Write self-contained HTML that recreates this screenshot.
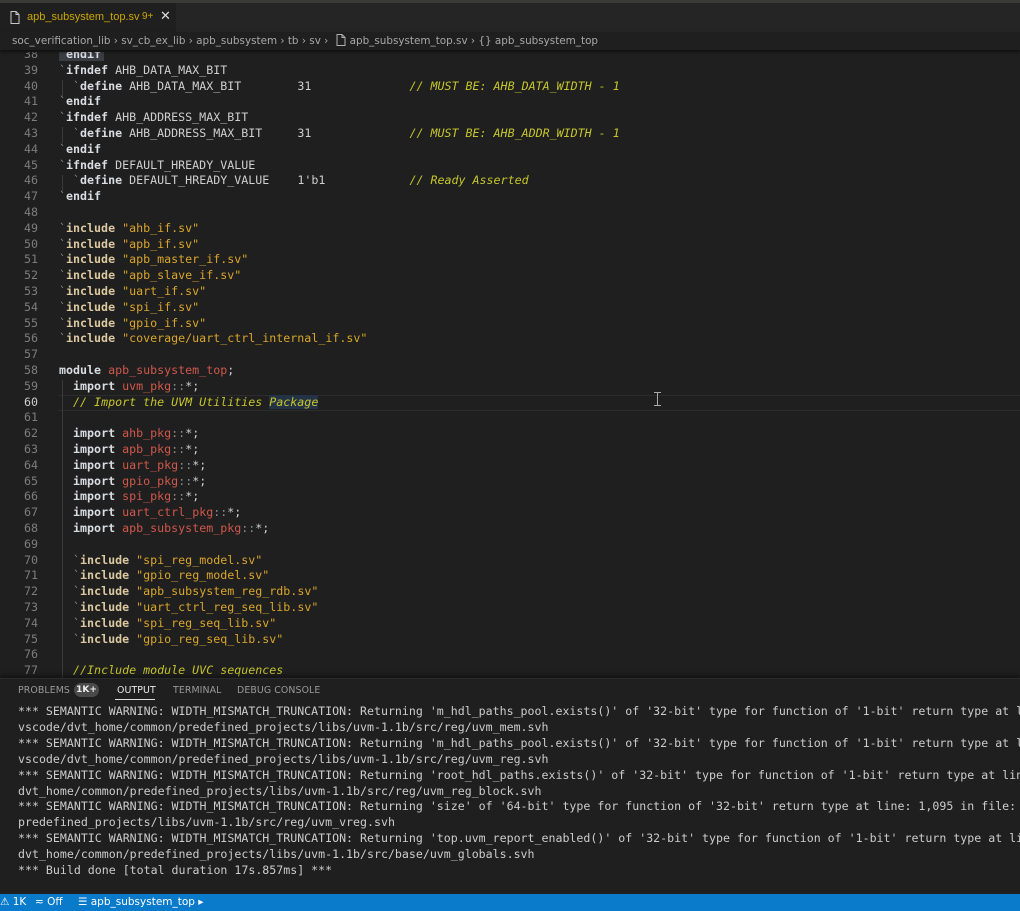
<!DOCTYPE html>
<html><head><meta charset="utf-8"><style>
*{margin:0;padding:0;box-sizing:border-box}
body{width:1020px;height:911px;background:#1f1f1f;overflow:hidden;position:relative;font-family:"DejaVu Sans","Liberation Sans",sans-serif}
.top{position:absolute;left:0;top:0;width:1020px;height:3px;background:#3a3a36}
.tabbar{position:absolute;left:0;top:3px;width:1020px;height:29px;background:#252525}
.tab{position:absolute;left:0;top:0;width:176px;height:29px;background:#1f1f1f;font-size:11px;color:#cca700;font-family:"Liberation Sans",sans-serif}
.bc{position:absolute;left:0;top:32px;width:1020px;height:18px;background:#1f1f1f;font-size:10.4px;color:#a8a8a8;padding-left:12px;line-height:18px;white-space:pre;box-shadow:0 2px 3px rgba(0,0,0,.5);z-index:2}
.ed{position:absolute;left:0;top:52px;width:1020px;height:626px;overflow:hidden}
.ln{position:absolute;left:0;width:1020px;height:15.8px;font-family:"DejaVu Sans Mono","Liberation Mono",monospace;font-size:11.65px;line-height:15.8px;white-space:pre;color:#cfcfcf}
.n{position:absolute;left:0;width:38px;text-align:right;color:#7d7d7d}
.c{position:absolute;left:59px}
.k{color:#d9dde2;font-weight:bold}
.b{color:#8a8a8a}
.i{color:#dcc8a0;font-weight:bold}
.s{color:#d9a62a}
.p{color:#d0584c}
.cm{color:#c6c62c;font-style:italic}
.g{color:#8a8a8a}
.panel{position:absolute;left:0;top:678px;width:1020px;height:216px;background:#1f1f1f;border-top:1px solid #2b2b2b;box-shadow:0 -3px 4px rgba(0,0,0,.4)}
.pt{position:absolute;top:6px;font-size:9.4px;color:#9a9a9a;letter-spacing:.1px}
.out{position:absolute;left:18px;font-family:"DejaVu Sans Mono","Liberation Mono",monospace;font-size:11.6px;line-height:15.9px;color:#cccccc;white-space:pre}
.sb{position:absolute;left:0;top:894px;width:1020px;height:17px;background:#0a7acb;color:#fff;font-size:10.5px;line-height:17px;white-space:pre}
</style></head><body>
<div class="top"></div>
<div class="tabbar"><div class="tab">
<svg style="position:absolute;left:10px;top:8px" width="10" height="13" viewBox="0 0 10 13"><path d="M1 .5h5l3 3v9H1z" fill="none" stroke="#c8c8c8" stroke-width="1"/><path d="M6 .5v3h3" fill="none" stroke="#c8c8c8"/></svg>
<span style="position:absolute;left:27px;top:8px">apb_subsystem_top.sv</span><span style="position:absolute;left:142px;top:8px;font-size:10px">9+</span>
<span style="position:absolute;left:160px;top:5px;color:#ddd;font-size:13px">✕</span></div></div>
<div class="bc">soc_verification_lib › sv_cb_ex_lib › apb_subsystem › tb › sv › <svg style="display:inline-block;vertical-align:-2px;margin:0 4px 0 4px" width="10" height="12" viewBox="0 0 10 12"><path d="M1 .5h5l3 3v8H1z M6 .5v3h3" fill="none" stroke="#b0b0b0"/></svg>apb_subsystem_top.sv › {} apb_subsystem_top</div>
<div class="ed">
<div style="position:absolute;left:58px;top:343px;width:962px;height:16px;border-top:1px solid #2c2c2c;border-bottom:1px solid #2c2c2c"></div>
<div style="position:absolute;left:59px;top:-5px;width:45px;height:14px;background:#3a3d41"></div>
<div style="position:absolute;left:62px;top:28px;width:1px;height:16px;background:#3a3a3a"></div>
<div style="position:absolute;left:62px;top:75px;width:1px;height:16px;background:#3a3a3a"></div>
<div style="position:absolute;left:62px;top:123px;width:1px;height:16px;background:#3a3a3a"></div>
<div style="position:absolute;left:62px;top:328px;width:1px;height:300px;background:#3a3a3a"></div>
<svg style="position:absolute;left:654px;top:340px" width="7" height="14"><path d="M0 .5h7M0 13.5h7M3.5 0v14" stroke="#aaa"/></svg>
<div class="ln" style="top:-5px"><span class="n">38</span><span class="c"><span class="b">`</span><span class="k">endif</span></span></div>
<div class="ln" style="top:10.8px"><span class="n">39</span><span class="c"><span class="b">`</span><span class="k">ifndef</span> AHB_DATA_MAX_BIT</span></div>
<div class="ln" style="top:26.6px"><span class="n">40</span><span class="c">  <span class="b">`</span><span class="k">define</span> AHB_DATA_MAX_BIT        31              <span class="cm">// MUST BE: AHB_DATA_WIDTH - 1</span></span></div>
<div class="ln" style="top:42.4px"><span class="n">41</span><span class="c"><span class="b">`</span><span class="k">endif</span></span></div>
<div class="ln" style="top:58.2px"><span class="n">42</span><span class="c"><span class="b">`</span><span class="k">ifndef</span> AHB_ADDRESS_MAX_BIT</span></div>
<div class="ln" style="top:74px"><span class="n">43</span><span class="c">  <span class="b">`</span><span class="k">define</span> AHB_ADDRESS_MAX_BIT     31              <span class="cm">// MUST BE: AHB_ADDR_WIDTH - 1</span></span></div>
<div class="ln" style="top:89.8px"><span class="n">44</span><span class="c"><span class="b">`</span><span class="k">endif</span></span></div>
<div class="ln" style="top:105.6px"><span class="n">45</span><span class="c"><span class="b">`</span><span class="k">ifndef</span> DEFAULT_HREADY_VALUE</span></div>
<div class="ln" style="top:121.4px"><span class="n">46</span><span class="c">  <span class="b">`</span><span class="k">define</span> DEFAULT_HREADY_VALUE    1'b1            <span class="cm">// Ready Asserted</span></span></div>
<div class="ln" style="top:137.2px"><span class="n">47</span><span class="c"><span class="b">`</span><span class="k">endif</span></span></div>
<div class="ln" style="top:153px"><span class="n">48</span></div>
<div class="ln" style="top:168.8px"><span class="n">49</span><span class="c"><span class="b">`</span><span class="i">include</span> <span class="s">"ahb_if.sv"</span></span></div>
<div class="ln" style="top:184.6px"><span class="n">50</span><span class="c"><span class="b">`</span><span class="i">include</span> <span class="s">"apb_if.sv"</span></span></div>
<div class="ln" style="top:200.4px"><span class="n">51</span><span class="c"><span class="b">`</span><span class="i">include</span> <span class="s">"apb_master_if.sv"</span></span></div>
<div class="ln" style="top:216.2px"><span class="n">52</span><span class="c"><span class="b">`</span><span class="i">include</span> <span class="s">"apb_slave_if.sv"</span></span></div>
<div class="ln" style="top:232px"><span class="n">53</span><span class="c"><span class="b">`</span><span class="i">include</span> <span class="s">"uart_if.sv"</span></span></div>
<div class="ln" style="top:247.8px"><span class="n">54</span><span class="c"><span class="b">`</span><span class="i">include</span> <span class="s">"spi_if.sv"</span></span></div>
<div class="ln" style="top:263.6px"><span class="n">55</span><span class="c"><span class="b">`</span><span class="i">include</span> <span class="s">"gpio_if.sv"</span></span></div>
<div class="ln" style="top:279.4px"><span class="n">56</span><span class="c"><span class="b">`</span><span class="i">include</span> <span class="s">"coverage/uart_ctrl_internal_if.sv"</span></span></div>
<div class="ln" style="top:295.2px"><span class="n">57</span></div>
<div class="ln" style="top:311px"><span class="n">58</span><span class="c"><span class="k">module</span> <span class="p">apb_subsystem_top</span>;</span></div>
<div class="ln" style="top:326.8px"><span class="n">59</span><span class="c">  <span class="k">import</span> <span class="p">uvm_pkg</span><span class="g">::</span>*;</span></div>
<div class="ln" style="top:342.6px"><span class="n" style="color:#ccc">60</span><span class="c">  <span class="cm">// Import the UVM Utilities <span style="background:#243246">Package</span></span></span></div>
<div class="ln" style="top:358.4px"><span class="n">61</span></div>
<div class="ln" style="top:374.2px"><span class="n">62</span><span class="c">  <span class="k">import</span> <span class="p">ahb_pkg</span><span class="g">::</span>*;</span></div>
<div class="ln" style="top:390px"><span class="n">63</span><span class="c">  <span class="k">import</span> <span class="p">apb_pkg</span><span class="g">::</span>*;</span></div>
<div class="ln" style="top:405.8px"><span class="n">64</span><span class="c">  <span class="k">import</span> <span class="p">uart_pkg</span><span class="g">::</span>*;</span></div>
<div class="ln" style="top:421.6px"><span class="n">65</span><span class="c">  <span class="k">import</span> <span class="p">gpio_pkg</span><span class="g">::</span>*;</span></div>
<div class="ln" style="top:437.4px"><span class="n">66</span><span class="c">  <span class="k">import</span> <span class="p">spi_pkg</span><span class="g">::</span>*;</span></div>
<div class="ln" style="top:453.2px"><span class="n">67</span><span class="c">  <span class="k">import</span> <span class="p">uart_ctrl_pkg</span><span class="g">::</span>*;</span></div>
<div class="ln" style="top:469px"><span class="n">68</span><span class="c">  <span class="k">import</span> <span class="p">apb_subsystem_pkg</span><span class="g">::</span>*;</span></div>
<div class="ln" style="top:484.8px"><span class="n">69</span></div>
<div class="ln" style="top:500.6px"><span class="n">70</span><span class="c">  <span class="b">`</span><span class="i">include</span> <span class="s">"spi_reg_model.sv"</span></span></div>
<div class="ln" style="top:516.4px"><span class="n">71</span><span class="c">  <span class="b">`</span><span class="i">include</span> <span class="s">"gpio_reg_model.sv"</span></span></div>
<div class="ln" style="top:532.2px"><span class="n">72</span><span class="c">  <span class="b">`</span><span class="i">include</span> <span class="s">"apb_subsystem_reg_rdb.sv"</span></span></div>
<div class="ln" style="top:548px"><span class="n">73</span><span class="c">  <span class="b">`</span><span class="i">include</span> <span class="s">"uart_ctrl_reg_seq_lib.sv"</span></span></div>
<div class="ln" style="top:563.8px"><span class="n">74</span><span class="c">  <span class="b">`</span><span class="i">include</span> <span class="s">"spi_reg_seq_lib.sv"</span></span></div>
<div class="ln" style="top:579.6px"><span class="n">75</span><span class="c">  <span class="b">`</span><span class="i">include</span> <span class="s">"gpio_reg_seq_lib.sv"</span></span></div>
<div class="ln" style="top:595.4px"><span class="n">76</span></div>
<div class="ln" style="top:611.2px"><span class="n">77</span><span class="c">  <span class="cm">//Include module UVC sequences</span></span></div>
</div>
<div class="panel">
<span class="pt" style="left:18px">PROBLEMS</span>
<span style="position:absolute;left:74px;top:4px;width:25px;height:14px;border-radius:7px;background:#4a4a4a;color:#eee;font-size:9px;font-weight:bold;line-height:14px;text-align:center">1K+</span>
<span class="pt" style="left:117px;color:#e8e8e8">OUTPUT</span>
<div style="position:absolute;left:115px;top:20px;width:40px;height:1px;background:#e0e0e0"></div>
<span class="pt" style="left:173px">TERMINAL</span>
<span class="pt" style="left:237px">DEBUG CONSOLE</span>
<div class="out" style="top:25px">*** SEMANTIC WARNING: WIDTH_MISMATCH_TRUNCATION: Returning 'm_hdl_paths_pool.exists()' of '32-bit' type for function of '1-bit' return type at line
vscode/dvt_home/common/predefined_projects/libs/uvm-1.1b/src/reg/uvm_mem.svh
*** SEMANTIC WARNING: WIDTH_MISMATCH_TRUNCATION: Returning 'm_hdl_paths_pool.exists()' of '32-bit' type for function of '1-bit' return type at line
vscode/dvt_home/common/predefined_projects/libs/uvm-1.1b/src/reg/uvm_reg.svh
*** SEMANTIC WARNING: WIDTH_MISMATCH_TRUNCATION: Returning 'root_hdl_paths.exists()' of '32-bit' type for function of '1-bit' return type at line
dvt_home/common/predefined_projects/libs/uvm-1.1b/src/reg/uvm_reg_block.svh
*** SEMANTIC WARNING: WIDTH_MISMATCH_TRUNCATION: Returning 'size' of '64-bit' type for function of '32-bit' return type at line: 1,095 in file:
predefined_projects/libs/uvm-1.1b/src/reg/uvm_vreg.svh
*** SEMANTIC WARNING: WIDTH_MISMATCH_TRUNCATION: Returning 'top.uvm_report_enabled()' of '32-bit' type for function of '1-bit' return type at line
dvt_home/common/predefined_projects/libs/uvm-1.1b/src/base/uvm_globals.svh
*** Build done [total duration 17s.857ms] ***</div>
</div>
<div class="sb"><span style="position:absolute;left:0">⚠ 1K</span><span style="position:absolute;left:35px">≂ Off</span><span style="position:absolute;left:78px">☰ apb_subsystem_top ▸</span></div>
</body></html>
